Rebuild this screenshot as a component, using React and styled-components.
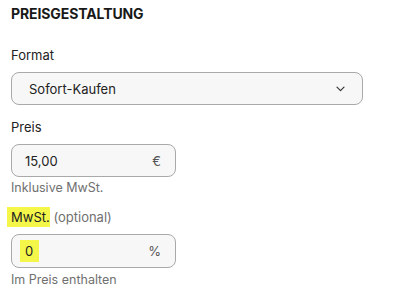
import React from "react";
import styled, { createGlobalStyle } from "styled-components";

const Global = createGlobalStyle`
  html, body { margin: 0; padding: 0; background: #fff; }
  body { font-family: Inter, "Open Sans", Arial, sans-serif; color: #222; }
`;

const Page = styled.div`
  width: 399px;
  height: 303px;
  padding: 5px 0 0 11px;
  box-sizing: border-box;
  display: flex;
  flex-direction: column;
`;

const Title = styled.h2`
  margin: 0;
  font-size: 14px;
  font-weight: 700;
  line-height: 18px;
  letter-spacing: -0.1px;
  color: #191919;
`;

const Field = styled.div`
  display: flex;
  flex-direction: column;
  margin-top: ${(p) => p.$mt}px;
`;

const Label = styled.label`
  font-size: 13px;
  line-height: 16px;
  margin-bottom: ${(p) => p.$mb}px;
`;

const Muted = styled.span`
  color: #707070;
`;

const Mark = styled.span`
  background: #f4f74a;
  padding: ${(p) => p.$pad || "1px 0"};
  margin: ${(p) => p.$m || "0"};
`;

const Box = styled.div`
  box-sizing: border-box;
  width: ${(p) => p.$w}px;
  height: ${(p) => p.$h}px;
  border: 1px solid #a9a9a9;
  border-radius: 8px;
  background: #f7f7f7;
  display: flex;
  align-items: center;
  justify-content: space-between;
  padding: ${(p) => p.$pad};
  font-size: 13px;
`;

const Unit = styled.span`
  color: #555;
  font-size: 13px;
`;

const Hint = styled.div`
  font-size: 12.5px;
  color: #707070;
  line-height: 16px;
  margin-top: ${(p) => p.$mt}px;
`;

const Chevron = () => (
  <svg width="9" height="6" viewBox="0 0 9 6" fill="none">
    <path d="M1 1.2l3.5 3.5 3.5-3.5" stroke="#333" strokeWidth="1.2" strokeLinecap="round" strokeLinejoin="round" />
  </svg>
);

export default function App() {
  return (
    <>
      <Global />
      <Page>
        <Title>PREISGESTALTUNG</Title>
        <Field $mt={24}>
          <Label $mb={9}>Format</Label>
          <Box $w={352} $h={33} $pad="0 17px 0 17px">
            <span>Sofort-Kaufen</span>
            <Chevron />
          </Box>
        </Field>
        <Field $mt={14}>
          <Label $mb={9}>Preis</Label>
          <Box $w={165} $h={33} $pad="0 14px 0 13px">
            <span>15,00</span>
            <Unit>€</Unit>
          </Box>
          <Hint $mt={3}>Inklusive MwSt.</Hint>
        </Field>
        <Field $mt={13}>
          <Label $mb={9}>
            <Mark $pad="2px 0 2px 4px" $m="0 0 0 -4px">MwSt.</Mark> <Muted>(optional)</Muted>
          </Label>
          <Box $w={165} $h={34} $pad="0 14px 0 8px">
            <Mark $pad="3px 6px 3px 5px">0</Mark>
            <Unit>%</Unit>
          </Box>
          <Hint $mt={4}>Im Preis enthalten</Hint>
        </Field>
      </Page>
    </>
  );
}
